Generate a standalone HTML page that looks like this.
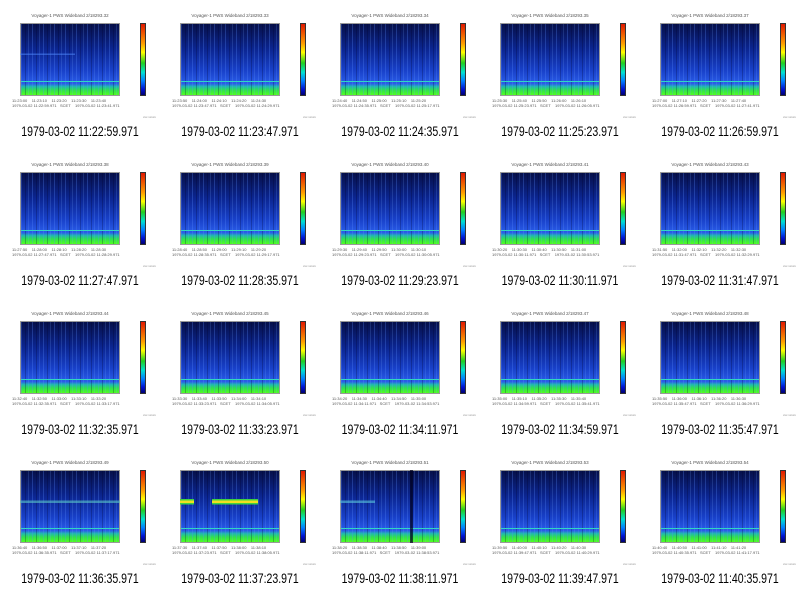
<!DOCTYPE html>
<html><head><meta charset="utf-8"><style>
body{margin:0;width:800px;height:596px;background:#fff;position:relative;overflow:hidden;font-family:"Liberation Sans",sans-serif}
.c{position:absolute;width:160px;height:149px}
.t{position:absolute;left:20px;width:100px;top:13px;text-align:center;font-size:4.5px;color:#555;white-space:nowrap}
.p{position:absolute;left:20px;top:23px;width:100px;height:73px;
background:
linear-gradient(to bottom,transparent 0 80%,#30d8c0 80% 82%,transparent 82%),
repeating-linear-gradient(90deg,rgba(90,140,255,.28) 0 1px,transparent 1px 4px,rgba(0,0,40,.25) 4px 5px,transparent 5px 7px,rgba(120,170,255,.18) 7px 8px,transparent 8px 11px),
linear-gradient(to bottom,#06104a 0%,#0b2590 35%,#1840c8 65%,#2a5ce8 84%,#20b8b0 88%,#30e050 93%,#50ff20 100%);
border:1px solid #999;box-sizing:border-box}
.b{position:absolute;left:20px;top:23px;width:100px;height:73px}
.cb{position:absolute;left:140px;top:23px;width:6px;height:73px;border:1px solid #333;box-sizing:border-box;
background:linear-gradient(to bottom,#e01800 0%,#f06000 15%,#ffa000 28%,#ffff00 40%,#20d020 55%,#00e0d0 68%,#0080ff 80%,#0010d0 92%,#000070 100%)}
.ya{position:absolute;left:6px;top:50px;font-size:4px;color:#666;transform:rotate(-90deg);white-space:nowrap}
.ra{position:absolute;left:108px;top:58px;font-size:4px;color:#666;transform:rotate(90deg);white-space:nowrap}
.x{position:absolute;left:12px;top:98px;font-size:4px;line-height:5px;color:#555;white-space:pre}
.s{position:absolute;left:143px;top:115px;font-size:3px;color:#888}
.l{position:absolute;left:0;width:160px;top:124px;text-align:center;font-size:13.5px;color:#000;white-space:nowrap;transform:scaleX(.78)}
.yl{position:absolute;left:13px;font-size:4px;color:#555}
.cl{position:absolute;left:131px;font-size:4px;color:#555}
</style></head><body>

<div class="c" style="left:0;top:0"><div class="t">Voyager-1 PWS Wideband 2/18293.32</div><div class="p"></div><div class="b" style="background:linear-gradient(to bottom,transparent 0 42%,rgba(80,140,255,.5) 42% 44%,transparent 44%) 0 0/55% 100% no-repeat"></div><div class="cb"></div><div class="x">11:23:00    11:23:10    11:23:20    11:23:30    11:23:40
1979-03-02 11:22:59.971   SCET    1979-03-02 11:23:41.971</div><div class="s">xxx xxxxx</div><div class="l">1979-03-02 11:22:59.971</div></div>
<div class="c" style="left:160px;top:0"><div class="t">Voyager-1 PWS Wideband 2/18293.33</div><div class="p"></div><div class="cb"></div><div class="x">11:23:50    11:24:00    11:24:10    11:24:20    11:24:30
1979-03-02 11:23:47.971   SCET    1979-03-02 11:24:29.971</div><div class="s">xxx xxxxx</div><div class="l">1979-03-02 11:23:47.971</div></div>
<div class="c" style="left:320px;top:0"><div class="t">Voyager-1 PWS Wideband 2/18293.34</div><div class="p"></div><div class="cb"></div><div class="x">11:24:40    11:24:50    11:25:00    11:25:10    11:25:20
1979-03-02 11:24:35.971   SCET    1979-03-02 11:25:17.971</div><div class="s">xxx xxxxx</div><div class="l">1979-03-02 11:24:35.971</div></div>
<div class="c" style="left:480px;top:0"><div class="t">Voyager-1 PWS Wideband 2/18293.35</div><div class="p"></div><div class="cb"></div><div class="x">11:25:30    11:25:40    11:25:50    11:26:00    11:26:10
1979-03-02 11:25:23.971   SCET    1979-03-02 11:26:05.971</div><div class="s">xxx xxxxx</div><div class="l">1979-03-02 11:25:23.971</div></div>
<div class="c" style="left:640px;top:0"><div class="t">Voyager-1 PWS Wideband 2/18293.37</div><div class="p"></div><div class="cb"></div><div class="x">11:27:00    11:27:10    11:27:20    11:27:30    11:27:40
1979-03-02 11:26:59.971   SCET    1979-03-02 11:27:41.971</div><div class="s">xxx xxxxx</div><div class="l">1979-03-02 11:26:59.971</div></div>

<div class="c" style="left:0;top:149px"><div class="t">Voyager-1 PWS Wideband 2/18293.38</div><div class="p"></div><div class="cb"></div><div class="x">11:27:50    11:28:00    11:28:10    11:28:20    11:28:30
1979-03-02 11:27:47.971   SCET    1979-03-02 11:28:29.971</div><div class="s">xxx xxxxx</div><div class="l">1979-03-02 11:27:47.971</div></div>
<div class="c" style="left:160px;top:149px"><div class="t">Voyager-1 PWS Wideband 2/18293.39</div><div class="p"></div><div class="cb"></div><div class="x">11:28:40    11:28:50    11:29:00    11:29:10    11:29:20
1979-03-02 11:28:35.971   SCET    1979-03-02 11:29:17.971</div><div class="s">xxx xxxxx</div><div class="l">1979-03-02 11:28:35.971</div></div>
<div class="c" style="left:320px;top:149px"><div class="t">Voyager-1 PWS Wideband 2/18293.40</div><div class="p"></div><div class="cb"></div><div class="x">11:29:30    11:29:40    11:29:50    11:30:00    11:30:10
1979-03-02 11:29:23.971   SCET    1979-03-02 11:30:05.971</div><div class="s">xxx xxxxx</div><div class="l">1979-03-02 11:29:23.971</div></div>
<div class="c" style="left:480px;top:149px"><div class="t">Voyager-1 PWS Wideband 2/18293.41</div><div class="p"></div><div class="cb"></div><div class="x">11:30:20    11:30:30    11:30:40    11:30:50    11:31:00
1979-03-02 11:30:11.971   SCET    1979-03-02 11:30:53.971</div><div class="s">xxx xxxxx</div><div class="l">1979-03-02 11:30:11.971</div></div>
<div class="c" style="left:640px;top:149px"><div class="t">Voyager-1 PWS Wideband 2/18293.43</div><div class="p"></div><div class="cb"></div><div class="x">11:31:50    11:32:00    11:32:10    11:32:20    11:32:30
1979-03-02 11:31:47.971   SCET    1979-03-02 11:32:29.971</div><div class="s">xxx xxxxx</div><div class="l">1979-03-02 11:31:47.971</div></div>

<div class="c" style="left:0;top:298px"><div class="t">Voyager-1 PWS Wideband 2/18293.44</div><div class="p"></div><div class="cb"></div><div class="x">11:32:40    11:32:50    11:33:00    11:33:10    11:33:20
1979-03-02 11:32:35.971   SCET    1979-03-02 11:33:17.971</div><div class="s">xxx xxxxx</div><div class="l">1979-03-02 11:32:35.971</div></div>
<div class="c" style="left:160px;top:298px"><div class="t">Voyager-1 PWS Wideband 2/18293.45</div><div class="p"></div><div class="cb"></div><div class="x">11:33:30    11:33:40    11:33:50    11:34:00    11:34:10
1979-03-02 11:33:23.971   SCET    1979-03-02 11:34:05.971</div><div class="s">xxx xxxxx</div><div class="l">1979-03-02 11:33:23.971</div></div>
<div class="c" style="left:320px;top:298px"><div class="t">Voyager-1 PWS Wideband 2/18293.46</div><div class="p"></div><div class="cb"></div><div class="x">11:34:20    11:34:30    11:34:40    11:34:50    11:35:00
1979-03-02 11:34:11.971   SCET    1979-03-02 11:34:53.971</div><div class="s">xxx xxxxx</div><div class="l">1979-03-02 11:34:11.971</div></div>
<div class="c" style="left:480px;top:298px"><div class="t">Voyager-1 PWS Wideband 2/18293.47</div><div class="p"></div><div class="cb"></div><div class="x">11:35:00    11:35:10    11:35:20    11:35:30    11:35:40
1979-03-02 11:34:59.971   SCET    1979-03-02 11:35:41.971</div><div class="s">xxx xxxxx</div><div class="l">1979-03-02 11:34:59.971</div></div>
<div class="c" style="left:640px;top:298px"><div class="t">Voyager-1 PWS Wideband 2/18293.48</div><div class="p"></div><div class="cb"></div><div class="x">11:35:50    11:36:00    11:36:10    11:36:20    11:36:30
1979-03-02 11:35:47.971   SCET    1979-03-02 11:36:29.971</div><div class="s">xxx xxxxx</div><div class="l">1979-03-02 11:35:47.971</div></div>

<div class="c" style="left:0;top:447px"><div class="t">Voyager-1 PWS Wideband 2/18293.49</div><div class="p"></div><div class="b" style="background:linear-gradient(to bottom,transparent 0 42%,rgba(90,200,200,.6) 42% 45%,transparent 45%)"></div><div class="cb"></div><div class="x">11:36:40    11:36:50    11:37:00    11:37:10    11:37:20
1979-03-02 11:36:35.971   SCET    1979-03-02 11:37:17.971</div><div class="s">xxx xxxxx</div><div class="l">1979-03-02 11:36:35.971</div></div>
<div class="c" style="left:160px;top:447px"><div class="t">Voyager-1 PWS Wideband 2/18293.50</div><div class="p"></div><div class="b" style="background:linear-gradient(to bottom,transparent 0 40%,#40d040 40% 42%,#f0e020 42% 45%,#40d040 45% 47%,transparent 47%) 0 0/14% 100% no-repeat,linear-gradient(to bottom,transparent 0 40%,#40d040 40% 42%,#f0e020 42% 45%,#40d040 45% 47%,transparent 47%) 60% 0/46% 100% no-repeat"></div><div class="cb"></div><div class="x">11:37:30    11:37:40    11:37:50    11:38:00    11:38:10
1979-03-02 11:37:23.971   SCET    1979-03-02 11:38:05.971</div><div class="s">xxx xxxxx</div><div class="l">1979-03-02 11:37:23.971</div></div>
<div class="c" style="left:320px;top:447px"><div class="t">Voyager-1 PWS Wideband 2/18293.51</div><div class="p"></div><div class="b" style="background:linear-gradient(to bottom,transparent 0 42%,rgba(90,200,220,.6) 42% 45%,transparent 45%) 0 0/35% 100% no-repeat,linear-gradient(90deg,transparent 0 70%,rgba(0,0,30,.7) 70% 73%,transparent 73%)"></div><div class="cb"></div><div class="x">11:38:20    11:38:30    11:38:40    11:38:50    11:39:00
1979-03-02 11:38:11.971   SCET    1979-03-02 11:38:53.971</div><div class="s">xxx xxxxx</div><div class="l">1979-03-02 11:38:11.971</div></div>
<div class="c" style="left:480px;top:447px"><div class="t">Voyager-1 PWS Wideband 2/18293.53</div><div class="p"></div><div class="cb"></div><div class="x">11:39:50    11:40:00    11:40:10    11:40:20    11:40:30
1979-03-02 11:39:47.971   SCET    1979-03-02 11:40:29.971</div><div class="s">xxx xxxxx</div><div class="l">1979-03-02 11:39:47.971</div></div>
<div class="c" style="left:640px;top:447px"><div class="t">Voyager-1 PWS Wideband 2/18293.54</div><div class="p"></div><div class="cb"></div><div class="x">11:40:40    11:40:50    11:41:00    11:41:10    11:41:20
1979-03-02 11:40:35.971   SCET    1979-03-02 11:41:17.971</div><div class="s">xxx xxxxx</div><div class="l">1979-03-02 11:40:35.971</div></div>

</body></html>
